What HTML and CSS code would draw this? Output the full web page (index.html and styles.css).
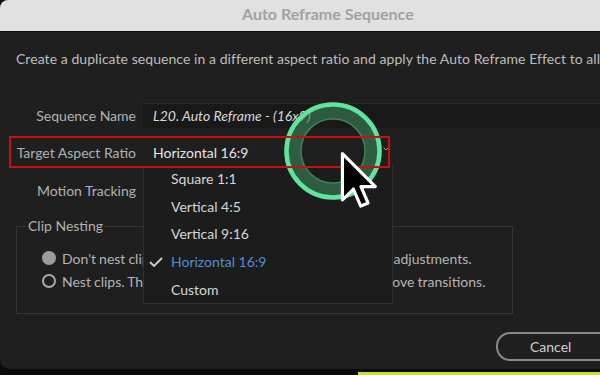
FILE: index.html
```html
<!DOCTYPE html>
<html lang="en">
  <head>
    <meta charset="UTF-8" />
    <title>Auto Reframe Sequence</title>
    <link rel="stylesheet" href="styles.css">
  </head>
  <body>
    <div class="titlebar">
      <span class="title">Auto Reframe Sequence</span>
    </div>
    <div class="dialog">
      <p class="desc">Create a duplicate sequence in a different aspect ratio and apply the Auto Reframe Effect to all</p>

      <div class="row row-name">
        <label class="label">Sequence Name</label>
        <div class="field input">L20. Auto Reframe - (16x9)</div>
      </div>
      <div class="row row-target">
        <label class="label">Target Aspect Ratio</label>
        <div class="field select">
          <span>Horizontal 16:9</span>
          <svg class="chev" width="6" height="4" viewBox="0 0 6 4"><path d="M0.5 0.5 L3 3 L5.5 0.5" fill="none" stroke="#9a9a9a" stroke-width="1"/></svg>
        </div>
      </div>
      <div class="row row-motion">
        <label class="label">Motion Tracking</label>
        <div class="field select"></div>
      </div>

      <fieldset class="nesting">
        <legend>Clip Nesting</legend>
        <div class="radio-row"><span class="radio checked"></span>Don't nest clips. Apply motion keyframes directly to all adjustments.</div>
        <div class="radio-row"><span class="radio"></span>Nest clips. This preserves the clip effects but it will remove transitions.</div>
      </fieldset>

      <div class="actions">
        <button class="btn">Cancel</button>
      </div>
    </div>
    <div class="dock"><span class="dock-bar"></span></div>

    <ul class="menu">
      <li>Square 1:1</li>
      <li>Vertical 4:5</li>
      <li>Vertical 9:16</li>
      <li class="selected">
        <svg class="check" width="14" height="10" viewBox="0 0 14 10"><path d="M1 5 L5 9 L13 1" fill="none" stroke="#cfcfcf" stroke-width="1.8"/></svg>
        Horizontal 16:9
      </li>
      <li>Custom</li>
    </ul>

    <svg class="click-ring" width="100" height="100" viewBox="0 0 100 100">
      <circle cx="50" cy="50" r="40" fill="none" stroke="rgba(58,132,88,0.62)" stroke-width="17"/>
      <circle cx="50" cy="50" r="32" fill="none" stroke="rgba(120,220,160,0.3)" stroke-width="1.5"/>
      <circle cx="50" cy="50" r="46.5" fill="none" stroke="#5fe39e" stroke-width="4.5"/>
    </svg>

    <div class="callout"></div>

    <svg class="cursor" width="39" height="59" viewBox="0 0 16 24">
      <path d="M1 1 L1 20 L5.5 15.5 L8.5 22.5 L11.5 21.2 L8.6 14.5 L14.5 14.5 Z" fill="#000" stroke="#fff" stroke-width="1.3" stroke-linejoin="round"/>
    </svg>
  </body>
</html>
```

FILE: styles.css
```css
body {
  margin: 0;
  width: 600px;
  height: 375px;
  overflow: hidden;
  position: relative;
  background-color: #0b0b0b;
  font-family: Lato, "Noto Sans", sans-serif;
  font-size: 14px;
}
.titlebar {
  height: 31px;
  background-color: #e1e1e1;
  border-bottom: 1px solid #0e0e0e;
  padding-left: 242px;
  line-height: 27px;
  border-top-left-radius: 8px;
}
.title {
  color: #a2a2a2;
  font-weight: bold;
  font-size: 16px;
}
.dialog {
  height: 337px;
  background-color: #1f1f1f;
  border-bottom-left-radius: 10px;
  overflow: hidden;
}
.desc {
  margin: 0;
  padding: 17px 0 0 16px;
  line-height: 20px;
  white-space: nowrap;
  letter-spacing: 0.06px;
  color: #bdbdbd;
}
.row {
  display: flex;
  align-items: center;
  height: 26px;
}
.row-name {
  margin-top: 33px;
}
.row-target {
  margin-top: 11px;
}
.row-motion {
  margin-top: 12px;
}
.label {
  width: 136px;
  text-align: right;
  color: #b2b2b2;
  white-space: nowrap;
}
.field {
  margin-left: 7px;
  flex: 1;
  height: 24px;
  display: flex;
  align-items: center;
  padding-left: 10px;
  white-space: nowrap;
}
.input {
  background-color: #191919;
  border-top: 1px solid #2a2a2a;
  font-style: italic;
  color: #d8d8d8;
}
.select {
  color: #e4e4e4;
  max-width: 236px;
  justify-content: space-between;
  padding-right: 4px;
}
.chev {
  margin-bottom: 6px;
}
.nesting {
  margin: 13px 0 0 16px;
  width: 497px;
  box-sizing: border-box;
  border: 1px solid #353535;
  padding: 11px 0 20px 10px;
}
.nesting legend {
  padding: 0 1px;
  line-height: 20px;
  color: #b2b2b2;
}
.radio-row {
  display: flex;
  align-items: center;
  height: 22px;
  margin-bottom: 1px;
  color: #b4b4b4;
  white-space: nowrap;
  word-spacing: -0.55px;
}
.radio {
  width: 14px;
  height: 14px;
  box-sizing: border-box;
  border: 2px solid #a8a8a8;
  border-radius: 50%;
  margin: 0 6px 0 15px;
}
.radio.checked {
  background-color: #9c9c9c;
  border-color: #9c9c9c;
}
.actions {
  margin-top: 18px;
  padding-left: 496px;
  white-space: nowrap;
}
.btn {
  width: 140px;
  height: 29px;
  background: transparent;
  border: 2px solid #8a8a8a;
  border-radius: 14px;
  color: #cfcfcf;
  font-family: inherit;
  font-size: 14px;
  text-align: left;
  padding: 0 0 0 32px;
}
.dock {
  height: 6px;
  display: flex;
  align-items: flex-end;
}
.dock-bar {
  margin-left: 358px;
  flex: 1;
  height: 3px;
  background-color: #cddf2e;
}
.menu {
  position: absolute;
  left: 143px;
  top: 165px;
  width: 250px;
  margin: 0;
  padding: 0;
  list-style: none;
  background-color: #1c1c1c;
  border: 1px solid #2e2e2e;
  border-top: none;
  box-sizing: border-box;
}
.menu li {
  position: relative;
  height: 27.7px;
  line-height: 27.7px;
  padding-left: 27px;
  color: #d6d6d6;
}
.menu li.selected {
  color: #4f8fd8;
}
.check {
  position: absolute;
  left: 5px;
  top: 9px;
}
.click-ring {
  position: absolute;
  left: 283px;
  top: 101px;
}
.callout {
  position: absolute;
  left: 9px;
  top: 136px;
  width: 381px;
  height: 32px;
  box-sizing: border-box;
  border: 2px solid #c90f0f;
}
.cursor {
  position: absolute;
  left: 340px;
  top: 151px;
}
```
